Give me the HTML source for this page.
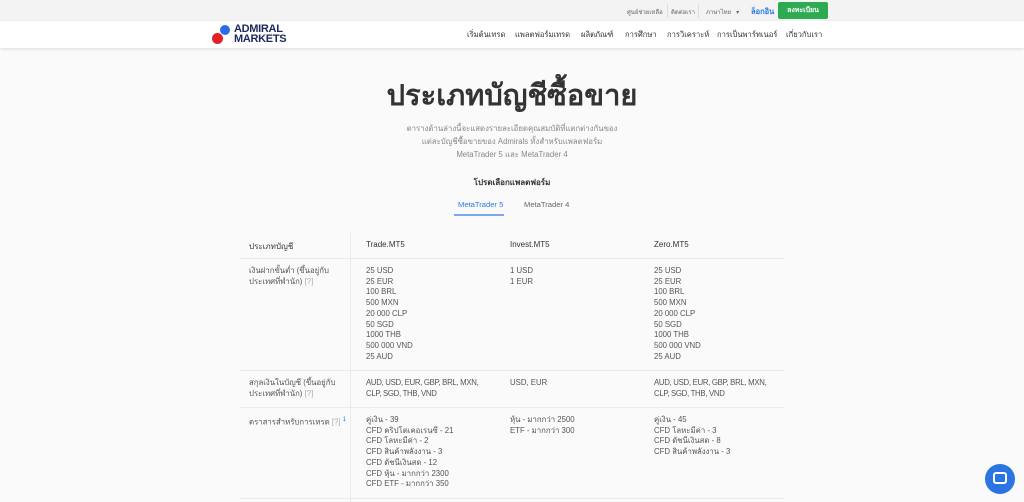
<!DOCTYPE html>
<html><head><meta charset="utf-8"><style>
*{margin:0;padding:0;box-sizing:border-box}
body{width:1024px;height:502px;overflow:hidden;background:#fafafa;font-family:"Liberation Sans","DejaVu Sans",sans-serif;color:#555;position:relative}
.a{position:absolute;white-space:nowrap}
.top{position:absolute;left:0;top:0;width:1024px;height:21px;background:#f3f3f3}
.nav{position:absolute;left:0;top:21px;width:1024px;height:27px;background:#fff;box-shadow:0 1px 3px rgba(0,0,0,.12)}
.t{font-size:6px;color:#666}
.n{font-size:7.6px;color:#333;top:29px}
.c{font-size:7.8px;line-height:10.7px;color:#555}
.h{font-size:8px;color:#333}
.hl{position:absolute;left:240px;width:544px;height:1px;background:#ebebeb}
</style></head><body>
<div class="top"></div>
<div class="a t" style="left:627px;top:7px">ศูนย์ช่วยเหลือ</div>
<div class="a" style="left:667px;top:4px;width:1px;height:14px;background:#ddd"></div>
<div class="a t" style="left:671px;top:7px">ติดต่อเรา</div>
<div class="a" style="left:698px;top:4px;width:1px;height:14px;background:#ddd"></div>
<div class="a t" style="left:706px;top:7px">ภาษาไทย &nbsp; ▾</div>
<div class="a" style="left:751px;top:6px;font-size:7.5px;color:#2b7ae4;font-weight:bold">ล็อกอิน</div>
<div class="a" style="left:778px;top:2px;width:50px;height:17px;background:#2eaa52;border-radius:2px;color:#fff;font-size:7px;font-weight:bold;text-align:center;line-height:17px">ลงทะเบียน</div>
<div class="nav"></div>
<div class="a" style="left:220px;top:25px;width:10px;height:10px;border-radius:50%;background:#2b6de8"></div>
<div class="a" style="left:212px;top:33px;width:11px;height:11px;border-radius:50%;background:#e0202a"></div>
<div class="a" style="left:234px;top:25px;font-size:11px;line-height:9.5px;font-weight:bold;color:#1c2a5c;letter-spacing:-0.3px">ADMIRAL<br>MARKETS</div>
<div class="a n" style="left:467px">เริ่มต้นเทรด</div>
<div class="a n" style="left:515px">แพลตฟอร์มเทรด</div>
<div class="a n" style="left:581px">ผลิตภัณฑ์</div>
<div class="a n" style="left:625px">การศึกษา</div>
<div class="a n" style="left:667px">การวิเคราะห์</div>
<div class="a n" style="left:717px">การเป็นพาร์ทเนอร์</div>
<div class="a n" style="left:786px">เกี่ยวกับเรา</div>
<div class="a" style="left:0;width:1024px;top:72px;text-align:center;font-size:29px;color:#333;font-weight:bold">ประเภทบัญชีซื้อขาย</div>
<div class="a" style="left:0;width:1024px;top:122px;text-align:center;font-size:7.8px;line-height:13px;color:#888">ตารางด้านล่างนี้จะแสดงรายละเอียดคุณสมบัติที่แตกต่างกันของ<br>แต่ละบัญชีซื้อขายของ Admirals ทั้งสำหรับแพลตฟอร์ม<br>MetaTrader 5 และ MetaTrader 4</div>
<div class="a" style="left:0;width:1024px;top:176px;text-align:center;font-size:8px;color:#333;font-weight:bold">โปรดเลือกแพลตฟอร์ม</div>
<div class="a" style="left:458px;top:200px;font-size:7.6px;color:#2b7ae4">MetaTrader 5</div>
<div class="a" style="left:454px;top:214px;width:50px;height:2px;background:#7aa8ee"></div>
<div class="a" style="left:524px;top:200px;font-size:7.6px;color:#666">MetaTrader 4</div>
<div class="a" style="left:350px;top:232px;width:1px;height:270px;background:#ebebeb"></div>
<div class="a h" style="left:249px;top:240px">ประเภทบัญชี</div>
<div class="a h" style="left:366px;top:240px">Trade.MT5</div>
<div class="a h" style="left:510px;top:240px">Invest.MT5</div>
<div class="a h" style="left:654px;top:240px">Zero.MT5</div>
<div class="hl" style="top:258px"></div>
<div class="a c" style="left:249px;top:266px">เงินฝากขั้นต่ำ (ขึ้นอยู่กับ<br>ประเทศที่พำนัก) <span style="color:#aaa">[?]</span></div>
<div class="a c" style="left:366px;top:266px">25 USD<br>25 EUR<br>100 BRL<br>500 MXN<br>20 000 CLP<br>50 SGD<br>1000 THB<br>500 000 VND<br>25 AUD</div>
<div class="a c" style="left:510px;top:266px">1 USD<br>1 EUR</div>
<div class="a c" style="left:654px;top:266px">25 USD<br>25 EUR<br>100 BRL<br>500 MXN<br>20 000 CLP<br>50 SGD<br>1000 THB<br>500 000 VND<br>25 AUD</div>
<div class="hl" style="top:370px"></div>
<div class="a c" style="left:249px;top:378px">สกุลเงินในบัญชี (ขึ้นอยู่กับ<br>ประเทศที่พำนัก) <span style="color:#aaa">[?]</span></div>
<div class="a c" style="left:366px;top:378px;letter-spacing:-0.3px">AUD, USD, EUR, GBP, BRL, MXN,<br>CLP, SGD, THB, VND</div>
<div class="a c" style="left:510px;top:378px">USD, EUR</div>
<div class="a c" style="left:654px;top:378px;letter-spacing:-0.3px">AUD, USD, EUR, GBP, BRL, MXN,<br>CLP, SGD, THB, VND</div>
<div class="hl" style="top:407px"></div>
<div class="a c" style="left:249px;top:415px">ตราสารสำหรับการเทรด <span style="color:#aaa">[?]</span> <sup style="color:#2b7ae4;font-size:6px">1</sup></div>
<div class="a c" style="left:366px;top:415px">คู่เงิน - 39<br>CFD คริปโตเคอเรนซี - 21<br>CFD โลหะมีค่า - 2<br>CFD สินค้าพลังงาน - 3<br>CFD ดัชนีเงินสด - 12<br>CFD หุ้น - มากกว่า 2300<br>CFD ETF - มากกว่า 350</div>
<div class="a c" style="left:510px;top:415px">หุ้น - มากกว่า 2500<br>ETF - มากกว่า 300</div>
<div class="a c" style="left:654px;top:415px">คู่เงิน - 45<br>CFD โลหะมีค่า - 3<br>CFD ดัชนีเงินสด - 8<br>CFD สินค้าพลังงาน - 3</div>
<div class="hl" style="top:498px"></div>
<div class="a" style="left:985px;top:464px;width:30px;height:30px;border-radius:50%;background:#2b74e2"></div>
<div class="a" style="left:993px;top:472px;width:14px;height:12px;border:2px solid #fff;border-radius:3px"></div>
</body></html>
